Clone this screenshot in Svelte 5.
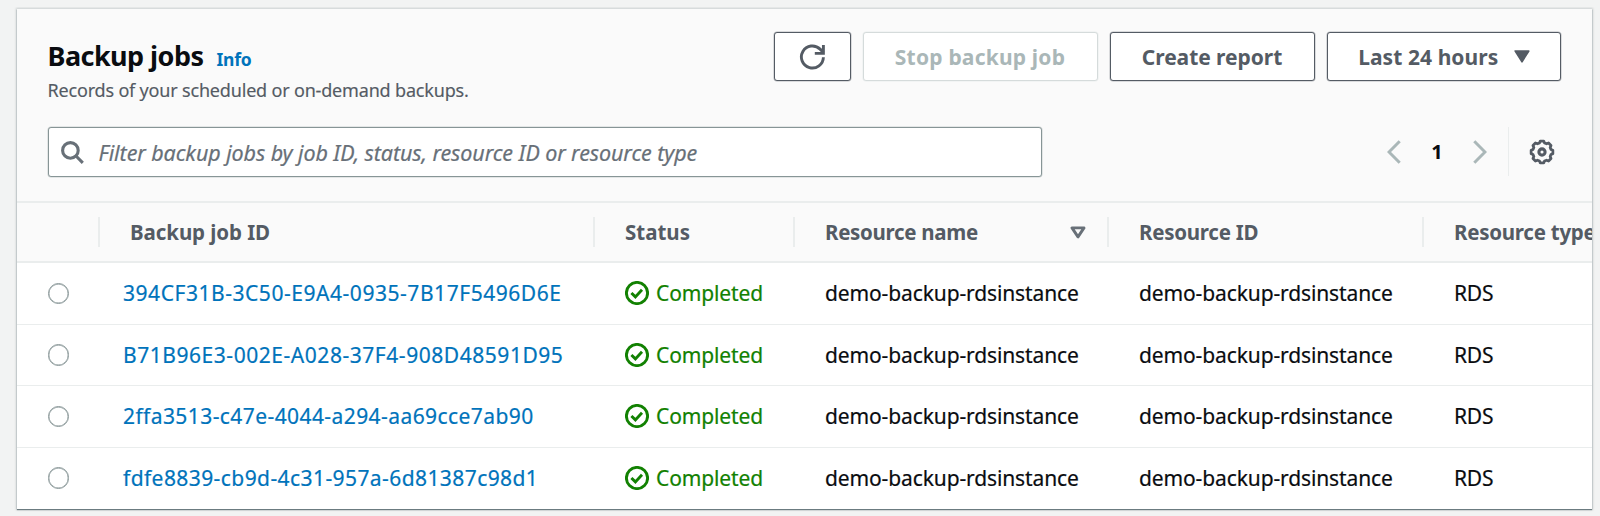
<script>
  const jobs = [
    { id: '394CF31B-3C50-E9A4-0935-7B17F5496D6E', upper: true },
    { id: 'B71B96E3-002E-A028-37F4-908D48591D95', upper: true },
    { id: '2ffa3513-c47e-4044-a294-aa69cce7ab90', upper: false },
    { id: 'fdfe8839-cb9d-4c31-957a-6d81387c98d1', upper: false }
  ];
  const resource = 'demo-backup-rdsinstance';
</script>

<main>
  <section class="card">
    <header>
      <div class="top">
        <div class="titles">
          <div class="line"><h1>Backup jobs</h1><a class="info" href="#info">Info</a></div>
          <p>Records of your scheduled or on-demand backups.</p>
        </div>
        <div class="actions">
          <button class="refresh" aria-label="Refresh">
            <svg width="26" height="26" viewBox="0 0 26 26" fill="none" stroke="currentColor" stroke-width="2.9">
              <path d="M24.4 13.2a11 11 0 1 1-3.3-8.1L24.4 8.4" />
              <path d="M24.4 1v8.4h-8.6" />
            </svg>
          </button>
          <button class="stop" disabled>Stop backup job</button>
          <button class="create">Create report</button>
          <button class="range"><span>Last 24 hours</span>
            <svg width="16" height="13" viewBox="0 0 16 13"><path d="M1.2 1h13.6L8 11.8z" fill="currentColor" stroke="currentColor" stroke-width="1.6" stroke-linejoin="round" /></svg>
          </button>
        </div>
      </div>
      <div class="tools">
        <div class="search">
          <svg width="23" height="23" viewBox="0 0 23 23" fill="none" stroke="#687078" stroke-width="3.1">
            <circle cx="9.4" cy="9.4" r="7.8" /><path d="M15 15l6.8 6.8" />
          </svg>
          <span>Filter backup jobs by job ID, status, resource ID or resource type</span>
        </div>
        <div class="pager">
          <svg width="14" height="24" viewBox="0 0 14 24" fill="none" stroke="#aab7b8" stroke-width="3"><path d="M12.7 1.2L2 12l10.7 10.8" /></svg>
          <b>1</b>
          <svg width="14" height="24" viewBox="0 0 14 24" fill="none" stroke="#aab7b8" stroke-width="3"><path d="M1.3 1.2L12 12 1.3 22.8" /></svg>
          <span class="gear">
            <svg width="26" height="26" viewBox="-13 -13 26 26" fill="none" stroke="#545b64" stroke-width="3.1" stroke-linejoin="round">
              <path d="M-1.9 -11.9h3.8l.9 2 2.2.9 2.2-.9 2.7 2.7-.9 2.2.9 2.2 2 .9v3.8l-2 .9-.9 2.2.9 2.2-2.7 2.7-2.2-.9-2.2.9-.9 2h-3.8l-.9-2-2.2-.9-2.2.9-2.7-2.7.9-2.2-.9-2.2-2-.9v-3.8l2-.9.9-2.2-.9-2.2 2.7-2.7 2.2.9 2.2-.9z" transform="scale(.91)" />
              <circle r="3.1" />
            </svg>
          </span>
        </div>
      </div>
    </header>

    <div class="row head">
      <div></div>
      <div class="jobid">Backup job ID</div>
      <div>Status</div>
      <div class="name"><span>Resource name</span>
        <svg width="16" height="13" viewBox="0 0 16 13"><path d="M2 1.9h12L8 10.9z" fill="none" stroke="#687078" stroke-width="2.9" stroke-linejoin="round" /></svg>
      </div>
      <div class="rid">Resource ID</div>
      <div class="rtype">Resource type</div>
    </div>
    {#each jobs as job}
      <div class="row body">
        <div class="pick"><i></i></div>
        <div class="link"><a href="#job" class:upper={job.upper}>{job.id}</a></div>
        <div class="status">
          <svg width="24" height="24" viewBox="0 0 24 24" fill="none" stroke="currentColor" stroke-width="2.9">
            <circle cx="12" cy="12" r="10.6" /><path d="M6.4 12l4 3.9 6.6-7.1" />
          </svg>
          <span>Completed</span>
        </div>
        <div>{resource}</div>
        <div>{resource}</div>
        <div class="type">RDS</div>
      </div>
    {/each}
  </section>
</main>

<style>
  :global(body) { background: #f2f3f3; }
  main {
    box-sizing: border-box;
    height: 516px;
    padding: 9px 8px 8px 17px;
    overflow: hidden;
    font-family: "Noto Sans", sans-serif;
    font-size: 21px;
    color: #0a0c10;
  }
  .card {
    height: 499.5px;
    background: #fff;
    box-shadow: 0 1px 1px rgba(0, 28, 36, .5), 0 0 2px 1px rgba(0, 28, 36, .16);
    clip-path: inset(-2px -3px -4px -3px);
  }
  header {
    box-sizing: border-box;
    height: 194px;
    padding: 23px 31px 0 31px;
    background: #fafafa;
    border-bottom: 2px solid #eaeded;
  }
  .top { display: flex; justify-content: space-between; height: 95px; }
  .titles { padding-top: 5px; margin-left: -.5px; }
  .line { display: flex; align-items: baseline; gap: 13px; height: 40px; line-height: 38px; }
  h1 { margin: 0; font-size: 27px; line-height: 38px; letter-spacing: -.55px; }
  .info { font-size: 17.5px; font-weight: 700; letter-spacing: -.2px; }
  a { color: #0073bb; text-decoration: none; }
  p { margin: 0; font-size: 18px; line-height: 26px; letter-spacing: -.18px; color: #545b64; white-space: nowrap; -webkit-text-stroke: .15px; }
  .actions { display: flex; gap: 12px; }
  button {
    box-sizing: border-box;
    display: flex;
    align-items: center;
    justify-content: center;
    height: 49px;
    padding: 0;
    border: 1px solid #545b64;
    box-shadow: 0 0 0 .5px #545b6466;
    border-radius: 3px;
    background: #fff;
    color: #545b64;
    font: 700 21px "Noto Sans", sans-serif;
    white-space: nowrap;
  }
  .refresh { width: 76.5px; }
  .stop { width: 235px; color: #aab7b8; border-color: #d5dbdb; box-shadow: 0 0 0 .5px #d5dbdb66; letter-spacing: .2px; }
  .create { width: 205px; letter-spacing: -.05px; }
  .range { width: 234.5px; gap: 16px; padding-left: 1px; letter-spacing: .07px; }
  .tools { display: flex; justify-content: space-between; }
  .search {
    box-sizing: border-box;
    display: flex;
    align-items: center;
    width: 994px;
    height: 49.5px;
    padding-left: 12px;
    gap: 14.5px;
    border: 1px solid #879596;
    border-radius: 3px;
    box-shadow: 0 0 0 .5px #87959666;
    background: #fff;
    color: #687078;
    font-size: 21.5px;
    font-style: italic;
    letter-spacing: -.09px;
    white-space: nowrap;
    -webkit-text-stroke: .2px;
  }
  .search svg { margin-top: 1px; }
  .search span { padding-top: 1px; }
  .pager { display: flex; align-items: center; height: 49px; }
  .pager b { width: 72px; text-align: center; font-size: 20px; }
  .gear {
    display: flex;
    align-items: center;
    height: 49px;
    margin-left: 21px;
    padding: 0 6.5px 0 19.5px;
    border-left: 1px solid #eaeded;
  }
  .row {
    box-sizing: border-box;
    display: grid;
    grid-template-columns: 82.5px 495px 200px 314px 314.5px 169px;
    width: 1575px;
    overflow: hidden;
    white-space: nowrap;
  }
  .row > div { display: flex; align-items: center; padding-left: 30.5px; }
  .head {
    height: 59.5px;
    padding: 14px 0 13.5px;
    background: #fafafa;
    border-bottom: 2px solid #eaeded;
    color: #545b64;
    font-size: 20.5px;
    font-weight: 700;
  }
  .head > div { line-height: 30px; border-right: 2px solid #eaeded; margin-right: -.5px; }
  .head > div:last-child { border: 0; }
  .jobid { letter-spacing: -.08px; }
  .name { justify-content: space-between; padding-right: 21px; letter-spacing: -.3px; }
  .rid { letter-spacing: -.25px; }
  .row > .rtype { padding-left: 31px; letter-spacing: -.25px; }
  .body { height: 61.4px; padding-top: .5px; letter-spacing: -.12px; -webkit-text-stroke: .2px; }
  .body + .body { border-top: 1px solid #eaeded; padding-top: 0; }
  .body > .link { padding-left: 23.5px; letter-spacing: .42px; }
  .upper { letter-spacing: .54px; }
  .pick i { box-sizing: border-box; width: 21.5px; height: 21.5px; border: 1.5px solid #879596; border-radius: 50%; box-shadow: inset 0 0 0 .4px #879596; }
  .status { gap: 7px; color: #128102; }
  .body > .type { padding-left: 31px; letter-spacing: -.2px; }
</style>
